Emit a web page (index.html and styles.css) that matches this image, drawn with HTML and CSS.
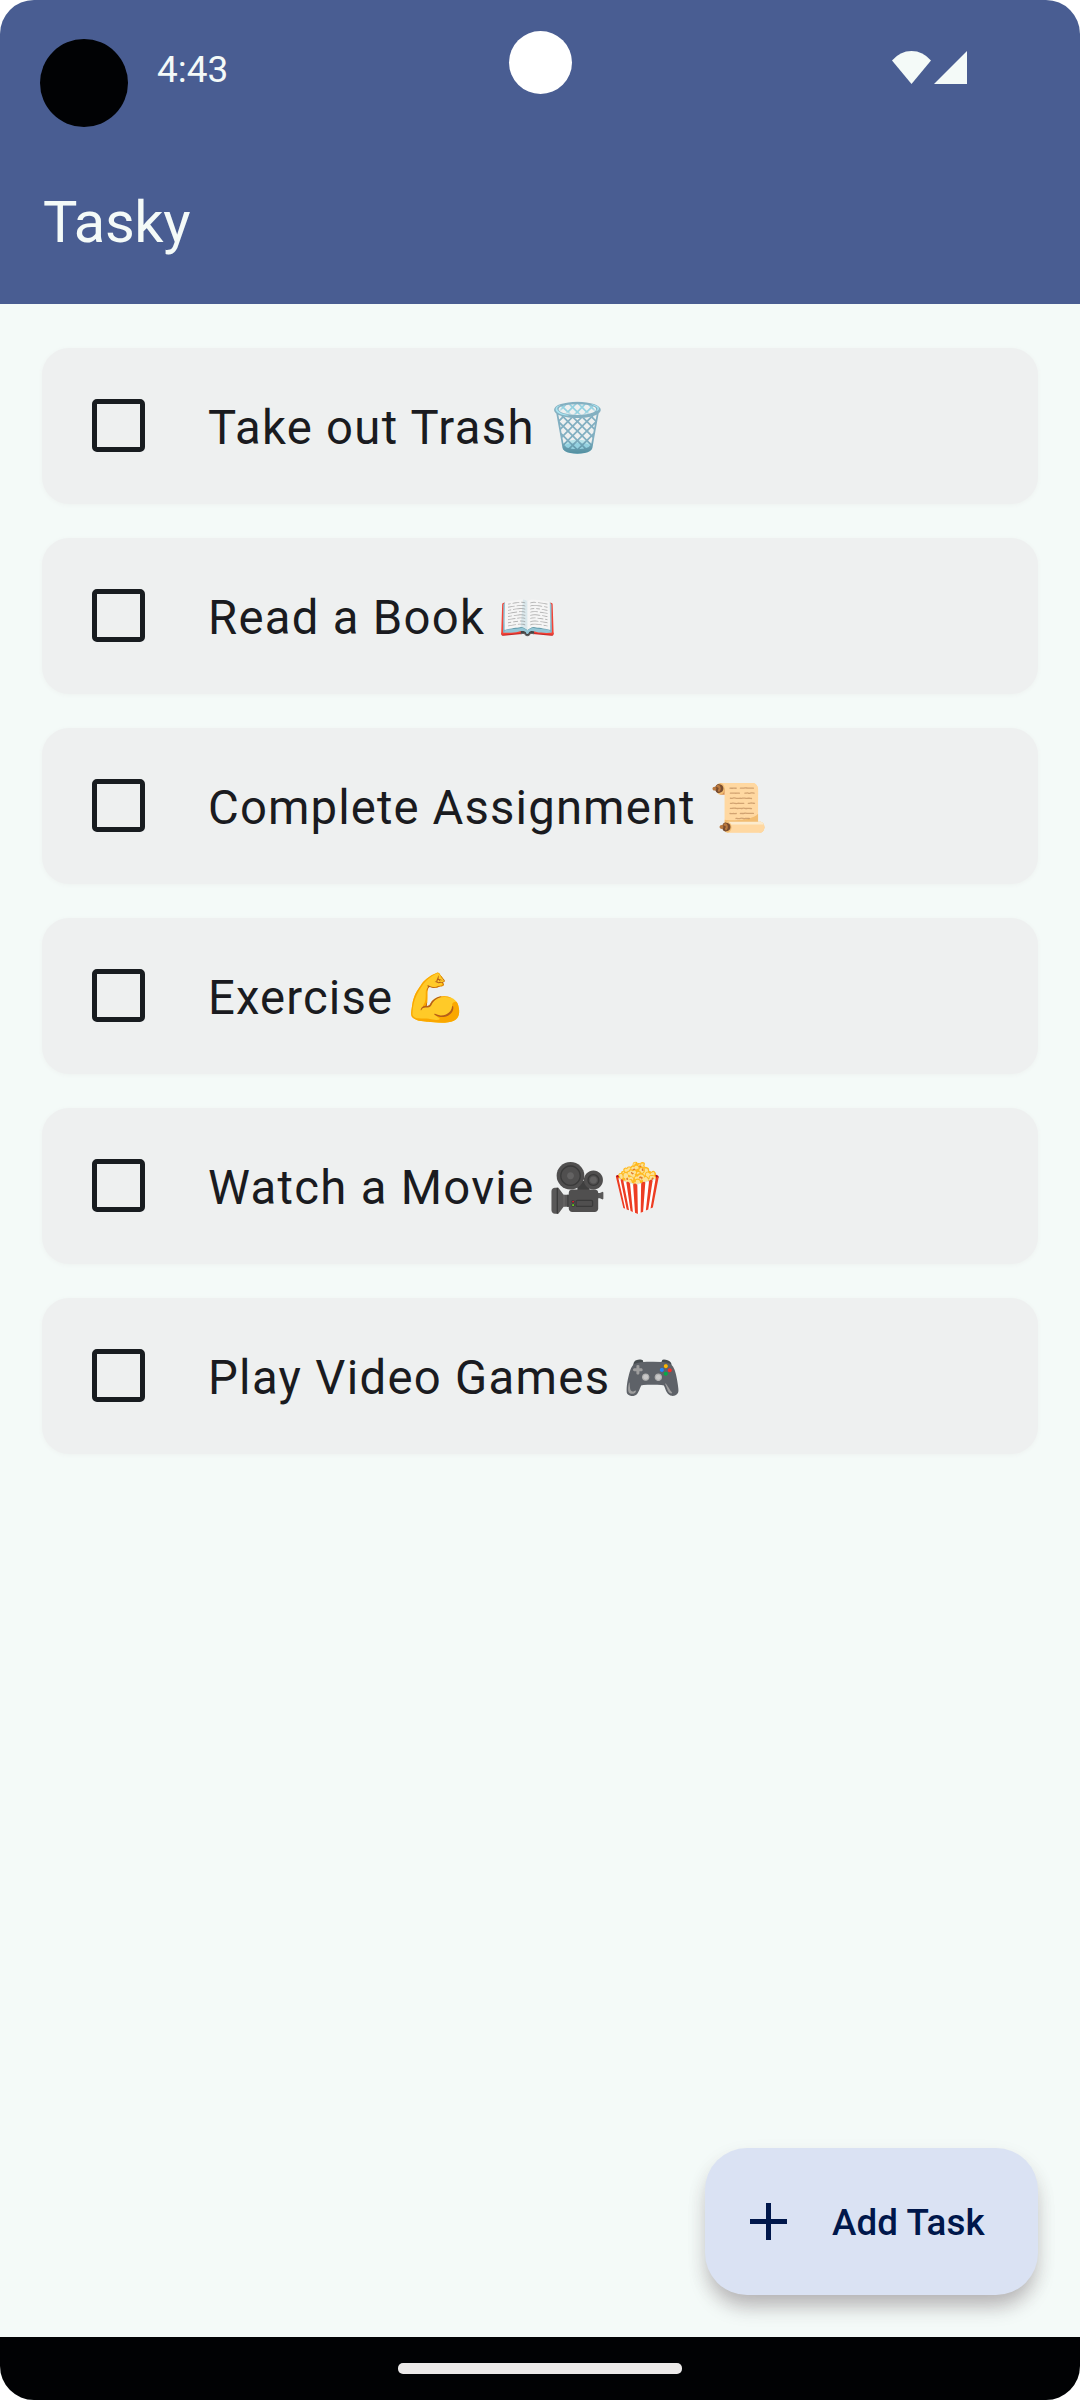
FILE: index.html
```html
<!DOCTYPE html>
<html lang="en">
<head>
<meta charset="utf-8">
<title>Tasky</title>
<link rel="stylesheet" href="styles.css">
</head>
<body>
<div class="screen">
  <header class="top">
    <div class="status">
      <span class="dot"></span>
      <span class="clock">4:43</span>
      <svg class="signals" width="75" height="33" viewBox="0 0 75 33">
        <path d="M0 9.6Q8 0 19.5 0T39 9.6L19.5 33Z"/>
        <path d="M42 33 75 0V33Z"/>
      </svg>
      <span class="camera"></span>
    </div>
    <h1 class="title">Tasky</h1>
  </header>
  <main class="tasks">
    <label class="task"><input class="check" type="checkbox"><span class="name">Take out Trash 🗑️</span></label>
    <label class="task"><input class="check" type="checkbox"><span class="name">Read a Book 📖</span></label>
    <label class="task"><input class="check" type="checkbox"><span class="name snug">Complete Assignment 📜</span></label>
    <label class="task"><input class="check" type="checkbox"><span class="name snug">Exercise <span class="arm">💪</span></span></label>
    <label class="task"><input class="check" type="checkbox"><span class="name">Watch a Movie 🎥🍿</span></label>
    <label class="task"><input class="check" type="checkbox"><span class="name">Play Video Games 🎮</span></label>
  </main>
  <div class="actions">
    <button class="add">
      <svg class="plus" width="37" height="37" viewBox="0 0 37 37"><path d="M16 0h5v16h16v5H21v16h-5V21H0v-5h16Z"/></svg>
      <span class="add-label">Add Task</span>
    </button>
  </div>
  <nav class="navbar"><span class="handle"></span></nav>
</div>
</body>
</html>
```
FILE: styles.css
```css
* { box-sizing: border-box; }
body { margin: 0; background: #fff; font-family: Roboto, sans-serif; }
.screen {
  width: 1080px;
  height: 2400px;
  display: flex;
  flex-direction: column;
  background: #f4faf8;
  border-radius: 34px;
  overflow: hidden;
}
.top { height: 304px; background: #495d92; color: #f4faf8; flex: none; }
.status {
  position: relative;
  height: 139px;
  padding: 39px 113px 0 40px;
  display: flex;
  align-items: flex-start;
}
.dot { width: 88px; height: 88px; border-radius: 50%; background: #010204; }
.clock { margin: 9px 0 0 29px; font-size: 37px; line-height: 44px; }
.signals { margin: 12px 0 0 auto; fill: #f4faf8; }
.camera {
  position: absolute;
  left: 509px;
  top: 31px;
  width: 63px;
  height: 63px;
  border-radius: 50%;
  background: #fff;
}
.title {
  margin: 0;
  padding: 46px 43px 0;
  font-size: 57.75px;
  line-height: 74px;
  font-weight: 400;
  letter-spacing: -0.4px;
}
.tasks {
  flex: 1;
  padding: 44px 42px 0;
  display: flex;
  flex-direction: column;
  gap: 34px;
}
.task {
  height: 156px;
  flex: none;
  padding-left: 50px;
  display: flex;
  align-items: center;
  gap: 63px;
  border-radius: 27px;
  background: #eef0f0;
  box-shadow: 0 1px 4px #eef2f0;
}
.check {
  appearance: none;
  margin: 0 0 2px;
  width: 53px;
  height: 53px;
  border: 5px solid #181c20;
  border-radius: 5px;
}
.name {
  padding-top: 4px;
  font-size: 47.25px;
  line-height: 63px;
  letter-spacing: 1.31px;
  color: #1a1b20;
  white-space: nowrap;
}
.snug { letter-spacing: 1.13px; }
.arm { display: inline-block; transform: scaleX(1.13); }
.actions { display: flex; justify-content: flex-end; padding: 0 42px 42px; flex: none; }
.add {
  width: 333px;
  height: 147px;
  padding: 0 0 0 45px;
  display: flex;
  align-items: center;
  gap: 45px;
  border: 0;
  border-radius: 42px;
  background: #dae2f3;
  color: #00174b;
  font: 500 36.75px/52px Roboto, sans-serif;
  letter-spacing: 0.1px;
  box-shadow: 0 15px 20px -4px rgba(55, 35, 45, .28), 0 8px 20px rgba(75, 55, 55, .09);
}
.add-label { padding-top: 3px; }
.plus { fill: #00174b; }
.navbar {
  height: 63px;
  flex: none;
  display: flex;
  justify-content: center;
  padding-top: 26px;
  background: #010204;
  z-index: 1;
}
.handle { width: 284px; height: 11px; border-radius: 5px; background: #ebe9e9; }
```
